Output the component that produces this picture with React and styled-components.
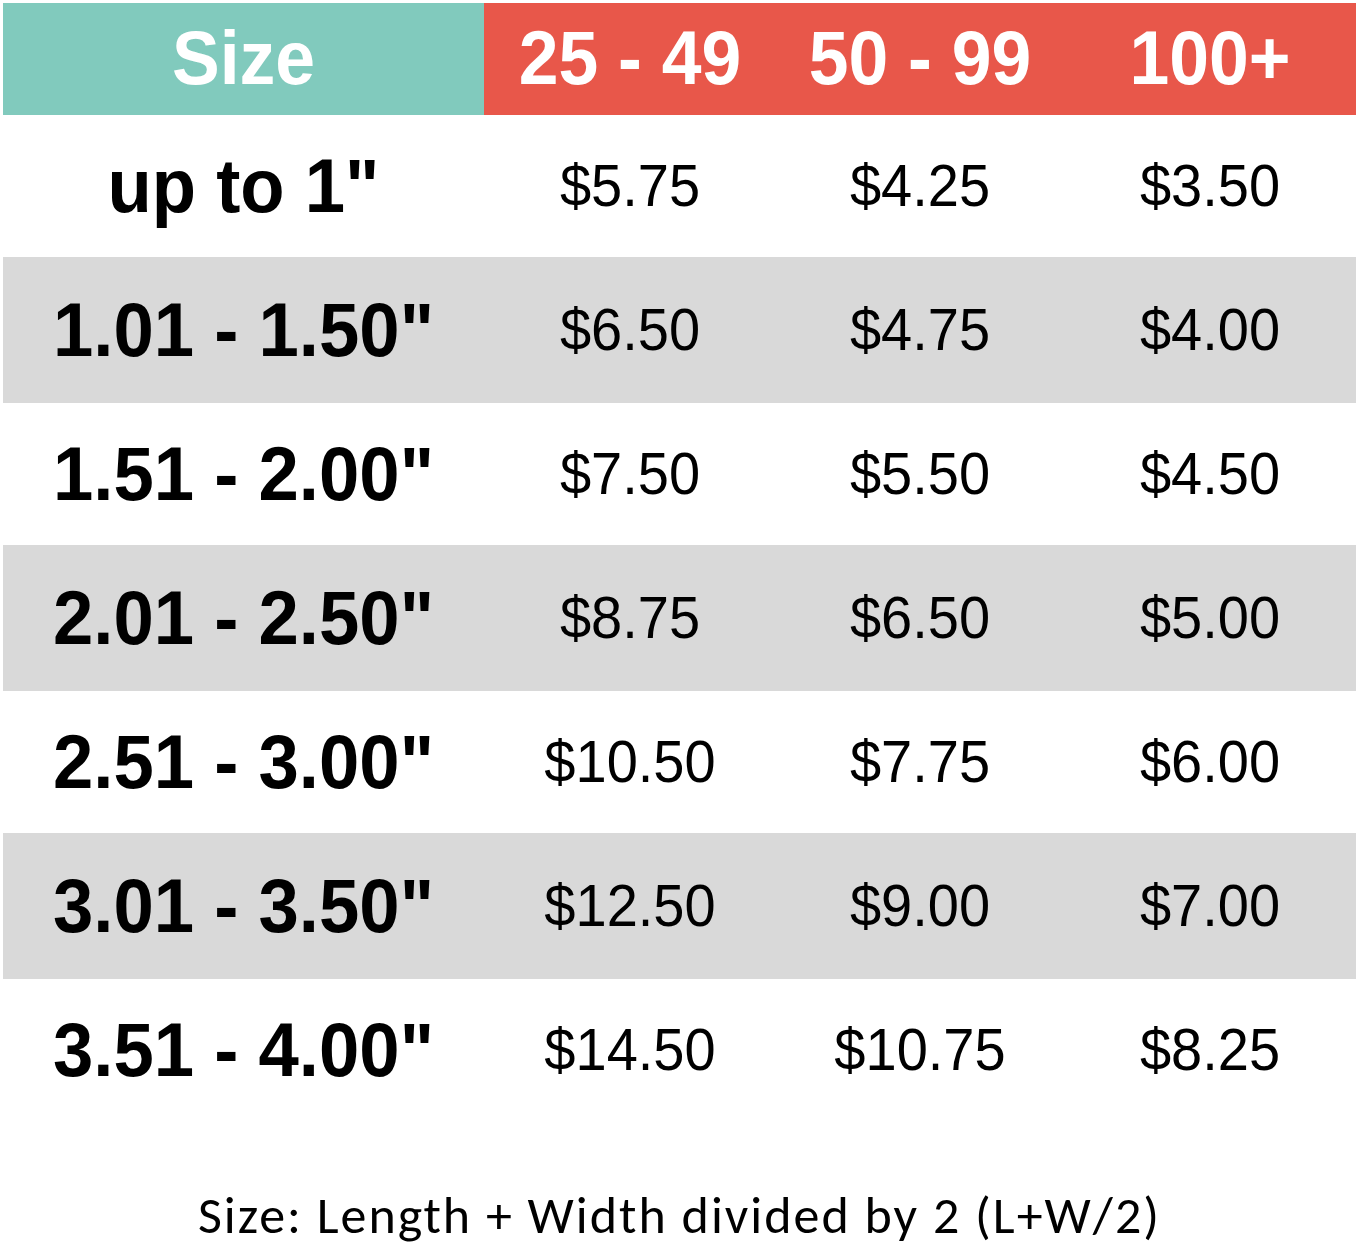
import React from "react";
import styled, { createGlobalStyle } from "styled-components";

const Global = createGlobalStyle`
  html, body { margin: 0; padding: 0; background: #ffffff; }
  body { font-family: "Liberation Sans", Arial, sans-serif; }
`;

const Page = styled.div`
  width: 1359px;
  height: 1253px;
  box-sizing: border-box;
  padding: 3px 3px 0 3px;
  display: flex;
  flex-direction: column;
  background: #ffffff;
`;

const Grid = styled.div`
  display: grid;
  grid-template-columns: 481px 292px 288px 292px;
  width: 1353px;
`;

const HeaderRow = styled(Grid)`
  height: 112px;
`;

const HeaderCell = styled.div`
  display: flex;
  align-items: center;
  justify-content: center;
  background: ${(p) => (p.$teal ? "#81cabd" : "#e8574a")};
  color: #ffffff;
  font-family: "Liberation Sans", Arial, sans-serif;
  font-weight: 700;
  font-size: 71.5px;
  line-height: 1;
  span { display: inline-block; transform: scaleY(1.06); }
`;

const Row = styled(Grid)`
  height: ${(p) => (p.$shade ? 146 : 142)}px;
  background: ${(p) => (p.$shade ? "#d9d9d9" : "#ffffff")};
`;

const Label = styled.div`
  display: flex;
  align-items: center;
  justify-content: center;
  font-family: "Liberation Sans", Arial, sans-serif;
  font-weight: 700;
  font-size: 72.5px;
  color: #000000;
  line-height: 1;
  span { display: inline-block; transform: scaleY(1.06); }
`;

const Price = styled.div`
  display: flex;
  align-items: center;
  justify-content: center;
  font-family: "Liberation Sans", Arial, sans-serif;
  font-weight: 400;
  font-size: 56px;
  color: #000000;
  line-height: 1;
  span { display: inline-block; transform: scaleY(1.06); }
`;

const Footer = styled.div`
  flex: 1;
  display: flex;
  align-items: flex-end;
  justify-content: center;
  padding-bottom: 12px;
  font-family: Carlito, Calibri, "Open Sans", Lato, sans-serif;
  font-size: 52px;
  letter-spacing: 2px;
  color: #000000;
  line-height: 1;
`;

const rows = [
  ["up to 1\"", "$5.75", "$4.25", "$3.50"],
  ["1.01 - 1.50\"", "$6.50", "$4.75", "$4.00"],
  ["1.51 - 2.00\"", "$7.50", "$5.50", "$4.50"],
  ["2.01 - 2.50\"", "$8.75", "$6.50", "$5.00"],
  ["2.51 - 3.00\"", "$10.50", "$7.75", "$6.00"],
  ["3.01 - 3.50\"", "$12.50", "$9.00", "$7.00"],
  ["3.51 - 4.00\"", "$14.50", "$10.75", "$8.25"],
];

export default function App() {
  return (
    <>
      <Global />
      <Page>
        <HeaderRow>
          <HeaderCell $teal><span>Size</span></HeaderCell>
          <HeaderCell><span>25 - 49</span></HeaderCell>
          <HeaderCell><span>50 - 99</span></HeaderCell>
          <HeaderCell><span>100+</span></HeaderCell>
        </HeaderRow>
        {rows.map((r, i) => (
          <Row key={i} $shade={i % 2 === 1}>
            <Label><span>{r[0]}</span></Label>
            <Price><span>{r[1]}</span></Price>
            <Price><span>{r[2]}</span></Price>
            <Price><span>{r[3]}</span></Price>
          </Row>
        ))}
        <Footer>Size: Length + Width divided by 2 (L+W/2)</Footer>
      </Page>
    </>
  );
}
